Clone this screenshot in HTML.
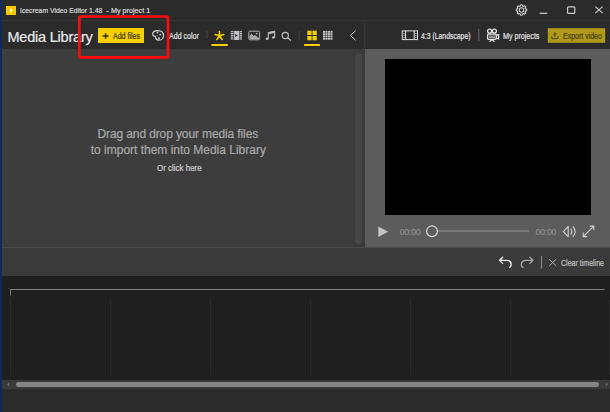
<!DOCTYPE html>
<html><head><meta charset="utf-8">
<style>
*{margin:0;padding:0;box-sizing:border-box}
html,body{width:610px;height:412px;overflow:hidden;background:#2b2b2b;font-family:"Liberation Sans",sans-serif}
.a{position:absolute}
.t{position:absolute;white-space:nowrap;transform-origin:0 0;line-height:1;-webkit-text-stroke:0.2px currentColor}
#blue{left:0;top:0;width:2px;height:412px;background:#0b2c5c}
#title{left:2px;top:0;width:608px;height:20px;background:#2b2b2b}
#tline{left:2px;top:20px;width:608px;height:1px;background:#363636}
#tool{left:2px;top:21px;width:608px;height:28px;background:#2b2b2b}
#media{left:2px;top:49px;width:363px;height:198px;background:#3d3d3d}
#mscroll{left:353px;top:49px;width:12px;height:198px;background:#3a3a3a}
#mthumb{left:354.6px;top:53px;width:7px;height:191px;background:#464646;border-radius:3.5px}
#vdiv{left:364px;top:21px;width:1px;height:28px;background:#383838}
#prev{left:365px;top:49px;width:245px;height:198px;background:#5c5c5c}
#video{left:385px;top:59px;width:206px;height:156px;background:#000}
#tlline{left:2px;top:247px;width:608px;height:1px;background:#4a4a4a}
#tlbar{left:2px;top:248px;width:608px;height:28px;background:#3a3a3a}
#tl{left:2px;top:276px;width:608px;height:104px;background:#1f1f1f}
#strack{left:2px;top:380px;width:608px;height:9px;background:#3a3a3a}
#sthumb{left:16px;top:382px;width:583px;height:4.5px;background:#858585;border-radius:2.25px}
svg{position:absolute;overflow:visible}
</style></head><body>
<div class="a" id="title"></div>
<div class="a" id="tline"></div>
<div class="a" id="tool"></div>
<div class="a" id="media"></div>
<div class="a" id="mscroll"></div>
<div class="a" id="mthumb"></div>
<div class="a" id="vdiv"></div>
<div class="a" id="prev"></div>
<div class="a" id="video"></div>
<div class="a" id="tlline"></div>
<div class="a" id="tlbar"></div>
<div class="a" id="tl"></div>
<div class="a" id="strack"></div>
<div class="a" id="sthumb"></div>
<div class="a" id="blue"></div>

<!-- title bar -->
<svg style="left:0;top:0" width="610" height="20">
  <rect x="6" y="6" width="10" height="9" fill="#f6c800"/>
  <path d="M10 8 L13 10.5 L10 13 Z" fill="#fff4c0"/>
  <!-- gear -->
  <g transform="translate(521.5 10)" fill="none" stroke="#cccccc" stroke-width="1.1"><path d="M-0.83,-5.23 L0.83,-5.23 L0.98,-4.08 L2.19,-3.58 L3.12,-4.29 L4.29,-3.12 L3.58,-2.19 L4.08,-0.98 L5.23,-0.83 L5.23,0.83 L4.08,0.98 L3.58,2.19 L4.29,3.12 L3.12,4.29 L2.19,3.58 L0.98,4.08 L0.83,5.23 L-0.83,5.23 L-0.98,4.08 L-2.19,3.58 L-3.12,4.29 L-4.29,3.12 L-3.58,2.19 L-4.08,0.98 L-5.23,0.83 L-5.23,-0.83 L-4.08,-0.98 L-3.58,-2.19 L-4.29,-3.12 L-3.12,-4.29 L-2.19,-3.58 L-0.98,-4.08 Z" stroke-linejoin="round"/><circle r="2.2"/></g>
  <line x1="539.7" y1="13.3" x2="547.3" y2="13.3" stroke="#cccccc" stroke-width="1.2"/>
  <rect x="567.6" y="6.8" width="7.2" height="6.6" rx="1" fill="none" stroke="#cccccc" stroke-width="1.2"/>
  <path d="M595.3 6.6 L602.6 13.1 M602.6 6.6 L595.3 13.1" stroke="#cccccc" stroke-width="1.1"/>
</svg>
<div class="t" id="t_title" style="left:20.46px;top:7.46px;font-size:7.6px;color:#dcdcdc;letter-spacing:0.000px;transform:scaleX(0.9005)">Icecream Video Editor 1.48</div>
<div class="t" id="t_dash" style="left:106.24px;top:7.46px;font-size:7.6px;color:#dcdcdc;letter-spacing:0.000px;transform:scaleX(1.0000)">-</div>
<div class="t" id="t_proj" style="left:111.49px;top:7.46px;font-size:7.6px;color:#dcdcdc;letter-spacing:0.000px;transform:scaleX(0.9479)">My project 1</div>

<!-- toolbar -->
<div class="t" id="t_ml" style="left:7.41px;top:29.50px;font-size:14.5px;color:#eaeaea;letter-spacing:-0.203px;transform:scaleX(1.0000)">Media Library</div>
<div class="a" style="left:98px;top:28px;width:46px;height:15px;background:#f8d000"></div>
<svg style="left:0;top:20px" width="610" height="30">
  <path d="M102.6 16 H108.6 M105.6 13 V19" stroke="#2b2b10" stroke-width="1.3"/>
  <!-- palette -->
  <path d="M158 10.5 C161.5 10.5 163.5 12.8 163.5 15.4 C163.5 18.4 161.4 20.2 159 20.2 C156.8 20.2 155.7 18.8 155.7 17.5 C155.7 16.5 155.1 16 154.3 16 C153.1 16 152.7 15 152.7 14 C152.7 11.8 155 10.5 158 10.5 Z" fill="none" stroke="#d4d4d4" stroke-width="1.25"/>
  <g fill="#d0d0d0">
    <ellipse cx="157.5" cy="12.6" rx="0.7" ry="1.2"/><circle cx="160.2" cy="14.6" r="0.9"/><circle cx="159" cy="18.3" r="1"/><circle cx="157.2" cy="15.8" r="0.5"/>
  </g>
  <!-- separator -->
  <rect x="206.5" y="11" width="1" height="8" fill="#454545"/>
  <!-- star -->
  <g stroke="#f8d000" stroke-width="1.6" stroke-linecap="round" transform="translate(219.5 15.8)"><path d="M0 0.2 V-4.2 M0 0 L4.2 -1.2 M0 0 L2.6 3.7 M0 0 L-2.6 3.7 M0 0 L-4.2 -1.2"/></g>
  <rect x="211.2" y="24" width="16.8" height="2" rx="1" fill="#f8d000"/>
  <!-- film -->
  <g fill="#b8b8b8"><rect x="230.8" y="10.90" width="2.7" height="1.3"/><rect x="239.5" y="10.90" width="2.5" height="1.3"/><rect x="230.8" y="12.74" width="2.7" height="1.3"/><rect x="239.5" y="12.74" width="2.5" height="1.3"/><rect x="230.8" y="14.58" width="2.7" height="1.3"/><rect x="239.5" y="14.58" width="2.5" height="1.3"/><rect x="230.8" y="16.42" width="2.7" height="1.3"/><rect x="239.5" y="16.42" width="2.5" height="1.3"/><rect x="230.8" y="18.26" width="2.7" height="1.3"/><rect x="239.5" y="18.26" width="2.5" height="1.3"/></g>
  <rect x="234.1" y="10.9" width="5" height="9.1" fill="#c2c2c2"/>
  <path d="M235.2 14 L237.8 15.5 L235.2 17.1 Z" fill="#2b2b2b"/>
  <!-- image -->
  <rect x="248.8" y="11.2" width="10.8" height="8.6" rx="1" fill="none" stroke="#b0b0b0" stroke-width="1"/>
  <path d="M249.5 19.3 L249.5 16 L251.5 13.5 L253.5 16 L255 15 L258.9 18 L258.9 19.3 Z" fill="#a8a8a8"/>
  <circle cx="256.8" cy="13.6" r="0.9" fill="#b0b0b0"/>
  <!-- music -->
  <g fill="#bcbcbc">
    <path d="M268.3 18.5 V12.6 L274.6 11.1 V17.4" fill="none" stroke="#bcbcbc" stroke-width="1.1"/>
    <path d="M268.3 12.6 L274.6 11.1 V12.9 L268.3 14.3 Z"/>
    <ellipse cx="267.1" cy="18.7" rx="1.5" ry="1.2"/>
    <ellipse cx="273.4" cy="17.4" rx="1.5" ry="1.2"/>
  </g>
  <!-- search -->
  <g fill="none" stroke="#bcbcbc" stroke-width="1.2">
    <circle cx="285.3" cy="15.5" r="3.1"/>
    <path d="M287.6 17.8 L290.5 20.2" stroke-linecap="round"/>
  </g>
  <rect x="298.7" y="10.8" width="1" height="9.2" fill="#454545"/>
  <!-- grid 2x2 -->
  <g fill="#f8d000">
    <rect x="307.3" y="10.7" width="4.3" height="4.3"/><rect x="312.5" y="10.7" width="4.3" height="4.3"/>
    <rect x="307.3" y="16" width="4.3" height="4.3"/><rect x="312.5" y="16" width="4.3" height="4.3"/>
  </g>
  <rect x="303.9" y="23.9" width="16.2" height="2.1" rx="1" fill="#f8d000"/>
  <!-- grid 4x4 -->
  <g fill="#c4c4c4" id="g44"><rect x="323.0" y="10.9" width="2" height="1.9"/><rect x="325.5" y="10.9" width="2" height="1.9"/><rect x="328.0" y="10.9" width="2" height="1.9"/><rect x="330.5" y="10.9" width="2" height="1.9"/><rect x="323.0" y="13.2" width="2" height="1.9"/><rect x="325.5" y="13.2" width="2" height="1.9"/><rect x="328.0" y="13.2" width="2" height="1.9"/><rect x="330.5" y="13.2" width="2" height="1.9"/><rect x="323.0" y="15.5" width="2" height="1.9"/><rect x="325.5" y="15.5" width="2" height="1.9"/><rect x="328.0" y="15.5" width="2" height="1.9"/><rect x="330.5" y="15.5" width="2" height="1.9"/><rect x="323.0" y="17.8" width="2" height="1.9"/><rect x="325.5" y="17.8" width="2" height="1.9"/><rect x="328.0" y="17.8" width="2" height="1.9"/><rect x="330.5" y="17.8" width="2" height="1.9"/></g>
  <!-- chevron -->
  <path d="M355.6 10.8 L350.4 15.5 L355.6 20.2" fill="none" stroke="#cfcfcf" stroke-width="1"/>
  <!-- aspect film -->
  <g fill="none" stroke="#e0e0e0" stroke-width="1">
    <rect x="402.3" y="10.9" width="15.2" height="8.7"/>
    <path d="M405.6 11 V19.5 M414.2 11 V19.5"/>
  </g>
  <g fill="#9a9a9a">
    <rect x="403.3" y="13" width="1.6" height="1"/><rect x="403.3" y="15" width="1.6" height="1"/><rect x="403.3" y="17" width="1.6" height="1"/>
    <rect x="415" y="13" width="1.6" height="1"/><rect x="415" y="15" width="1.6" height="1"/><rect x="415" y="17" width="1.6" height="1"/>
  </g>
  <rect x="478.3" y="8.8" width="1" height="12.6" fill="#6a6a6a"/>
  <!-- camera -->
  <g fill="none" stroke="#e6e6e6" stroke-width="1.25">
    <circle cx="489.6" cy="11.1" r="2"/><circle cx="494.4" cy="11.1" r="2"/>
    <rect x="487.6" y="14" width="8.6" height="5.4" rx="0.8"/>
    <path d="M496.2 15.4 L498.6 14.6 V18.8 L496.2 18"/>
    <path d="M489.6 21.7 L492 19.5 L494.4 21.7"/>
  </g>
  <path d="M488.8 16.1 H495 M488.8 17.4 H495" stroke="#e6e6e6" stroke-width="0.7"/>
  <!-- export btn -->
  <rect x="547.8" y="8.2" width="57.4" height="14.6" fill="#b09a18"/>
  <g fill="none" stroke="#463e0c" stroke-width="1">
    <path d="M551.8 16.2 V18.6 H558 V16.2"/>
    <path d="M554.9 17 V12.8 M553.2 14.4 L554.9 12.8 L556.6 14.4"/>
  </g>
</svg>
<div class="t" id="t_af" style="left:112.87px;top:32.00px;font-size:8.5px;color:#3a3308;letter-spacing:0.000px;transform:scaleX(0.8292)">Add files</div>
<div class="t" id="t_ac" style="left:169.25px;top:32.00px;font-size:8.5px;color:#e2e2e2;letter-spacing:0.000px;transform:scaleX(0.8330)">Add color</div>
<div class="t" id="t_ls" style="left:420.85px;top:32.00px;font-size:8.5px;color:#e2e2e2;letter-spacing:0.000px;transform:scaleX(0.8062)">4:3 (Landscape)</div>
<div class="t" id="t_mp" style="left:503.37px;top:32.00px;font-size:8.5px;color:#e2e2e2;letter-spacing:0.000px;transform:scaleX(0.8384)">My projects</div>
<div class="t" id="t_ev" style="left:562.76px;top:32.00px;font-size:8.5px;color:#453d0c;letter-spacing:0.000px;transform:scaleX(0.8228)">Export video</div>

<!-- media library center text -->
<div class="t" id="t_d1" style="left:97.57px;top:128.24px;font-size:12px;color:#a9a9a9;letter-spacing:-0.119px;transform:scaleX(1.0000)">Drag and drop your media files</div>
<div class="t" id="t_d2" style="left:90.77px;top:144.14px;font-size:12px;color:#a9a9a9;letter-spacing:-0.009px;transform:scaleX(1.0000)">to import them into Media Library</div>
<div class="t" id="t_oc" style="left:157.18px;top:163.80px;font-size:8.5px;color:#cfcfcf;letter-spacing:0.000px;transform:scaleX(0.9371)">Or click here</div>

<!-- video controls -->
<svg style="left:0;top:210px" width="610" height="40">
  <path d="M378.3 16.4 L388.2 21.7 L378.3 27 Z" fill="#c4c4c4"/>
  <rect x="438" y="20.4" width="91" height="1.2" fill="#8c8c8c"/>
  <circle cx="432" cy="21.2" r="5.4" fill="none" stroke="#d2d2d2" stroke-width="1.3"/>
  <g fill="none" stroke="#cfcfcf" stroke-width="1.1">
    <path d="M568.2 16.5 V26.6 L563.3 21.6 Z" stroke-linejoin="round"/>
    <path d="M570.7 18.6 Q572.9 21.6 570.7 24.6"/>
    <path d="M572.9 16.3 Q577.3 21.6 572.9 26.9"/>
    <path d="M583.2 26.6 L593.8 16.1 M589.8 16.1 H593.8 V20.1 M583.2 22.6 V26.6 H587.2"/>
  </g>
</svg>
<div class="t" id="t_t1" style="left:399.75px;top:227.60px;font-size:8.5px;color:#8e8e8e;letter-spacing:-0.074px;transform:scaleX(1.0000)">00:00</div>
<div class="t" id="t_t2" style="left:535.58px;top:227.60px;font-size:8.5px;color:#8e8e8e;letter-spacing:-0.145px;transform:scaleX(1.0000)">00:00</div>

<!-- timeline toolbar -->
<svg style="left:0;top:250px" width="610" height="25">
  <g fill="none" stroke="#f0f0f0" stroke-width="1.3" stroke-linecap="round" stroke-linejoin="round">
    <path d="M502.6 7.2 L499.6 10.3 L502.6 13.4 M499.8 10.3 H506.2 C509.6 10.3 511.2 12.3 511.2 14.5 C511.2 16 510.6 17 509.6 17.4"/>
  </g>
  <g fill="none" stroke="#a8a8a8" stroke-width="1.3" stroke-linecap="round" stroke-linejoin="round">
    <path d="M529.9 7.2 L532.9 10.3 L529.9 13.4 M532.7 10.3 H526.3 C522.9 10.3 521.3 12.3 521.3 14.5 C521.3 16 521.9 17 522.9 17.4"/>
  </g>
  <rect x="541" y="5.9" width="1" height="12.7" fill="#8a8a8a"/>
  <path d="M549.2 9.2 L556.2 15.9 M556.2 9.2 L549.2 15.9" stroke="#a8a8a8" stroke-width="1"/>
</svg>
<div class="t" id="t_ct" style="left:560.57px;top:259.00px;font-size:8.5px;color:#c0c0c0;letter-spacing:0.000px;transform:scaleX(0.8276)">Clear timeline</div>

<!-- timeline -->
<svg style="left:0;top:276px" width="610" height="136">
  <path d="M10.5 19.5 V13.5 H604.5" fill="none" stroke="#7e7e7e" stroke-width="1"/>
  <g fill="#2b2b2b">
    <rect x="10" y="24" width="1" height="75"/><rect x="110" y="24" width="1" height="75"/><rect x="210" y="24" width="1" height="75"/>
    <rect x="310" y="24" width="1" height="75"/><rect x="410" y="24" width="1" height="75"/><rect x="510" y="24" width="1" height="75"/><rect x="609" y="24" width="1" height="75"/>
  </g>
  <path d="M9 106.7 L7 108.5 L9 110.3 Z" fill="#707070"/>
  <path d="M606 106.7 L608 108.5 L606 110.3 Z" fill="#6a6a6a"/>
</svg>

<!-- red box -->
<svg style="left:0;top:0" width="610" height="70">
  <rect x="79.3" y="16.5" width="88.7" height="40.9" rx="2" fill="none" stroke="#ff0a0a" stroke-width="2.7"/>
</svg>
</body></html>
